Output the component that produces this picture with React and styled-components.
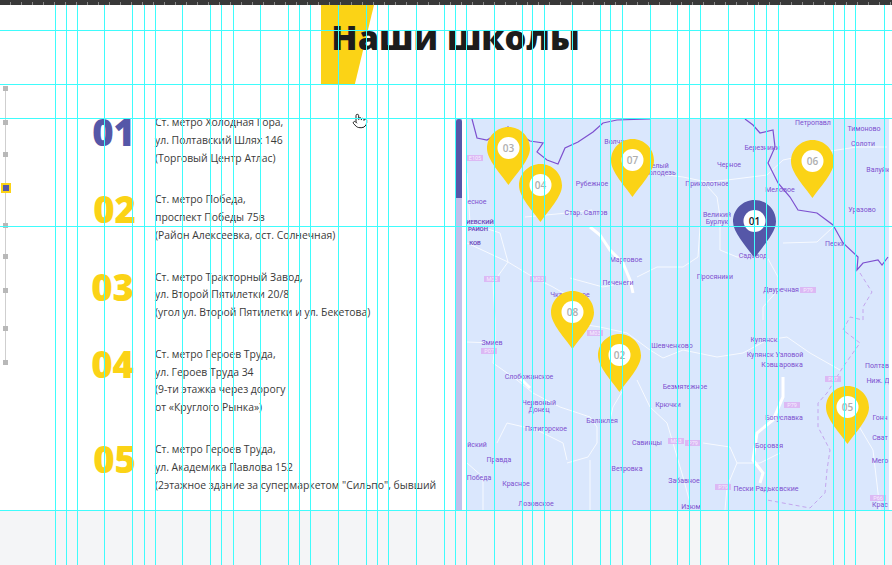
import React from 'react';
import styled, { createGlobalStyle } from 'styled-components';
import { Pointer } from 'lucide-react';

const verticalGuides = [
  55, 66, 77, 104, 132, 144, 155, 182, 210, 221, 233, 260, 288, 299, 310, 338, 366, 377, 388, 416, 444,
  455, 466, 494, 522, 532, 544, 572, 600, 610, 622, 650, 677, 689, 700, 728, 754, 766, 778, 833, 844, 855, 884,
];
const horizontalGuides = [30, 84, 118, 226, 510];

const railDots = [
  { y: 88 }, { y: 122 }, { y: 154 }, { y: 188, active: true }, { y: 225 },
  { y: 256 }, { y: 290 }, { y: 328 }, { y: 362 },
];

const schools = [
  { num: '01', color: '#5557a8', pad: 20, lines: ['Ст. метро Холодная Гора,', 'ул. Полтавский Шлях 146', '(Торговый Центр Атлас)'] },
  { num: '02', color: '#fbd316', pad: 19, lines: ['Ст. метро Победа,', 'проспект Победы 75в', '(Район Алексеевка, ост. Солнечная)'] },
  { num: '03', color: '#fbd316', pad: 21, lines: ['Ст. метро Тракторный Завод,', 'ул. Второй Пятилетки 20/8', '(угол ул. Второй Пятилетки и ул. Бекетова)'] },
  { num: '04', color: '#fbd316', pad: 21, lines: ['Ст. метро Героев Труда,', 'ул. Героев Труда 34', '(9-ти этажка через дорогу', 'от «Круглого Рынка»)'] },
  { num: '05', color: '#fbd316', pad: 19, lines: ['Ст. метро Героев Труда,', 'ул. Академика Павлова 152', '(2этажное здание за супермаркетом "Сильпо", бывший'] },
];

const pins = [
  { num: '03', x: 487, y: 127 },
  { num: '04', x: 519, y: 164 },
  { num: '07', x: 611, y: 139 },
  { num: '01', x: 733, y: 200, active: true },
  { num: '06', x: 791, y: 140 },
  { num: '08', x: 551, y: 291 },
  { num: '02', x: 598, y: 334 },
  { num: '05', x: 826, y: 386 },
];

const mapLabels = [
  ['Петропавл', 813, 125], ['Тимоново', 864, 131], ['Солоти', 863, 146], ['Валуйк', 878, 172], ['Уразово', 862, 212],
  ['Волчанск', 620, 144], ['Белый', 658, 168], ['Колодезь', 660, 175], ['Черное', 729, 167], ['Березники', 762, 150],
  ['Меловое', 780, 192], ['Приколотное', 707, 186], ['Рубежное', 592, 186], ['Стар. Салтов', 586, 215],
  ['Великий', 717, 217], ['Бурлук', 717, 224], ['Садовод', 753, 258], ['Пески', 835, 246], ['Мартовое', 626, 262],
  ['Печенеги', 618, 285], ['Просяники', 715, 279], ['Двуречная', 781, 292], ['Чкаловское', 570, 297], ['есное', 477, 204],
  ['Змиев', 492, 345], ['Шевченково', 672, 348], ['Купянск', 764, 342], ['Купянск Узловой', 775, 357],
  ['Ковшаровка', 782, 367], ['Слобожанское', 529, 379], ['Безмятежное', 685, 389], ['Крючки', 668, 407],
  ['Червоный', 539, 405], ['Донец', 539, 412], ['Балаклея', 602, 423], ['Пятигорское', 546, 431], ['Богуславка', 784, 420],
  ['Полтав', 877, 368], ['Ниж. Д', 878, 383], ['Гонч', 880, 420], ['Сват', 880, 440], ['Мего', 880, 463],
  ['Крас', 880, 507], ['Савинцы', 647, 445], ['Боровая', 769, 448], ['йский', 477, 447], ['Правда', 499, 462],
  ['Победа', 479, 480], ['Ветровка', 627, 471], ['Красное', 516, 486], ['Забавное', 684, 483],
  ['Пески Радьковские', 766, 491], ['Лозовское', 536, 506], ['Изюм', 691, 509],
];

const mapDistricts = [
  ['ИЕВСКИЙ', 480, 224], ['РАЙОН', 478, 231], ['КОВ', 475, 245],
];

const mapBadges = [
  ['E105', 475, 158], ['M03', 492, 279], ['M03', 538, 279], ['P79', 808, 290], ['P07', 489, 351], ['M03', 595, 333],
  ['P79', 792, 405], ['P07', 833, 379], ['P66', 878, 498], ['M03', 676, 441], ['P79', 693, 443], ['P79', 723, 487],
];

const roads = [
  '467,173 470,223 500,233 508,262',
  '467,243 508,262 533,277 553,287 570,297',
  '508,262 493,283 495,320 495,343 493,363 517,380 533,393 560,407 590,417 597,427 597,443 588,457 567,463',
  '525,217 567,213 592,210',
  '637,277 657,267 683,267 698,257 700,227',
  '570,278 603,287 623,283',
  '653,173 683,177 707,182 727,180 767,175 783,160 817,153 857,147 887,147',
  '708,187 717,197 720,217 720,250 737,257 767,257 778,277 778,290 763,307 763,320',
  '783,243 817,242 833,227',
  '467,342 493,343',
  '497,443 507,423 537,430 563,443 567,460',
  '573,323 600,327 627,333 650,350 663,358 683,350 717,357 743,353 767,340 787,337 810,353 840,370',
  '623,390 613,407 610,420',
  '637,380 650,407 667,423 673,443 683,477 690,503',
  '703,443 730,447 737,463 760,463 780,453',
  '737,463 727,487 725,510',
  '857,423 873,450 880,510',
  '467,463 483,477 483,510',
  '590,460 590,510',
];

const rivers = [
  '590,227 600,235 610,250 623,263 630,280 633,293',
  '783,377 783,397 773,420 757,433 753,460 763,473 760,483',
  '520,378 530,388',
];

const GlobalStyle = createGlobalStyle`
  html, body {
    margin: 0;
    background: #fff;
  }
  body {
    font-family: "Open Sans", "Noto Sans", sans-serif;
  }
`;

const Page = styled.div`
  position: relative;
  width: 892px;
  height: 565px;
  overflow: hidden;
  display: flex;
  flex-direction: column;
  background: #f4f5f7;
`;

const Ruler = styled.div`
  height: 5px;
  flex: none;
  background:
    repeating-linear-gradient(90deg, transparent 0 10px, #8a8a8a 10px 11px) 0 2px / 100% 3px no-repeat,
    #383838;
`;

const Header = styled.header`
  position: relative;
  flex: none;
  height: 79px;
  display: flex;
  justify-content: center;
  background: #fff;
`;

const TitleMark = styled.div`
  position: absolute;
  left: 321px;
  top: 0;
  width: 53px;
  height: 79px;
  background: #fbd316;
  clip-path: polygon(0 0, 100% 0, 64% 100%, 0 100%);
`;

const Title = styled.h1`
  position: relative;
  margin: 12px 0 0 19px;
  font-size: 34.3px;
  line-height: 40px;
  font-weight: 800;
  color: #1c1c1c;
`;

const Main = styled.main`
  position: relative;
  flex: none;
  height: 426px;
  display: flex;
  background: #fff;
  overflow: hidden;
`;

const Rail = styled.nav`
  position: relative;
  flex: none;
  width: 11px;
  padding-top: 2px;
  &::before {
    content: '';
    position: absolute;
    left: 5px;
    top: 4px;
    width: 1px;
    height: 274px;
    background: #cfcfcf;
  }
`;

const RailDot = styled.span`
  position: absolute;
  box-sizing: border-box;
  left: ${(p) => (p.$active ? '1px' : '3px')};
  top: ${(p) => p.$top - 84 - (p.$active ? 5 : 2)}px;
  width: ${(p) => (p.$active ? '10px' : '5px')};
  height: ${(p) => (p.$active ? '10px' : '5px')};
  background: ${(p) => (p.$active ? '#5557a8' : '#b8b8b8')};
  border: ${(p) => (p.$active ? '2px solid #fbd316' : 'none')};
`;

const SchoolList = styled.section`
  flex: none;
  width: 445px;
  padding-top: 30px;
  display: flex;
  flex-direction: column;
  gap: 23.9px;
`;

const School = styled.article`
  display: flex;
`;

const SchoolNum = styled.div`
  flex: none;
  box-sizing: border-box;
  width: 144px;
  padding-right: ${(p) => p.$pad}px;
  text-align: right;
  font-size: 36.5px;
  line-height: 37px;
  font-weight: 800;
  color: ${(p) => p.$color};
`;

const Address = styled.div`
  font-size: 10.4px;
  line-height: 17.8px;
  color: #3a3a3a;
  white-space: nowrap;
`;

const ScrollTrack = styled.div`
  flex: none;
  width: 6px;
  margin-top: 35px;
  background: #c1c1ec;
`;

const ScrollThumb = styled.div`
  height: 79px;
  border-radius: 3px 3px 0 0;
  background: #5557a8;
`;

const MapPane = styled.div`
  position: relative;
  flex: none;
  width: 423px;
  margin: 35px 0 0 4px;
  background: #dae7fd;
  overflow: hidden;
`;

const MapCanvas = styled.svg`
  display: block;
  width: 423px;
  height: 391px;
  font-family: Roboto, "Noto Sans", sans-serif;
`;

const MapLabel = styled.text`
  font-size: 7px;
  fill: #7d50cf;
  text-anchor: middle;
`;

const DistrictLabel = styled(MapLabel)`
  font-size: 6px;
  font-weight: 600;
  fill: #6a45b8;
`;

const BadgeText = styled.text`
  font-size: 5.5px;
  fill: #f6efff;
  text-anchor: middle;
`;

const Pin = styled.div`
  position: absolute;
  left: ${(p) => p.$x - 466}px;
  top: ${(p) => p.$y - 119}px;
  width: 43px;
  height: 58px;
`;

const PinShape = styled.svg`
  display: block;
  width: 43px;
  height: 58px;
`;

const PinNum = styled.span`
  position: absolute;
  left: 0;
  right: 0;
  top: 12px;
  text-align: center;
  font-size: 10px;
  line-height: 18px;
  font-weight: 600;
  color: ${(p) => (p.$active ? '#1c1c1c' : '#aeaeae')};
`;

const Cursor = styled.div`
  position: absolute;
  left: 352px;
  top: 113px;
  display: flex;
  color: #222;
`;

const GuideV = styled.i`
  position: absolute;
  top: 5px;
  bottom: 0;
  left: ${(p) => p.$x}px;
  width: 1px;
  background: #3ffcfc;
`;

const GuideH = styled.i`
  position: absolute;
  left: 0;
  right: 0;
  top: ${(p) => p.$y}px;
  height: 1px;
  background: #3ffcfc;
`;

const MapDrawing = () => (
  <MapCanvas viewBox="466 119 423 391">
    {rivers.map((points) => (
      <polyline key={points} points={points} fill="none" stroke="#fff" strokeWidth="3" />
    ))}
    {roads.map((points) => (
      <polyline key={points} points={points} fill="none" stroke="#f7faff" strokeWidth="1" />
    ))}
    <polyline
      points="472,119 477,138 487,140 508,127 530,141 543,143 537,152 547,160 558,164 565,148 578,142 593,132 603,123 617,120 650,119"
      fill="none"
      stroke="#7d50cf"
      strokeWidth="1.2"
    />
    <polyline
      points="745,119 753,125 760,133 773,130 775,147 768,163 778,183 790,197 798,210 817,213 833,225 843,243 858,257 857,270 863,263 878,260 882,265 888,257"
      fill="none"
      stroke="#7d50cf"
      strokeWidth="1.2"
    />
    <polyline
      points="860,273 872,292 863,307 863,320 850,317 843,330 860,343 843,367 827,393 818,403 818,427 830,450 827,470 825,493 810,508 767,500"
      fill="none"
      stroke="#c3a6ee"
      strokeWidth="1"
      strokeDasharray="4 3"
    />
    {mapBadges.map(([text, x, y]) => (
      <g key={`${text}-${x}`}>
        <rect x={x - 8} y={y - 3} width="16" height="6" fill="#dcb9f4" />
        <BadgeText x={x} y={y + 2}>{text}</BadgeText>
      </g>
    ))}
    {mapLabels.map(([text, x, y]) => (
      <MapLabel key={`${text}-${x}`} x={x} y={y}>{text}</MapLabel>
    ))}
    {mapDistricts.map(([text, x, y]) => (
      <DistrictLabel key={text} x={x} y={y}>{text}</DistrictLabel>
    ))}
  </MapCanvas>
);

const MapPin = ({ num, x, y, active }) => (
  <Pin $x={x} $y={y}>
    <PinShape viewBox="0 0 43 58">
      <path
        d="M21.5 0C33.4 0 43 9.6 43 21.5C43 33 29 47 21.5 58C14 47 0 33 0 21.5C0 9.6 9.6 0 21.5 0Z"
        fill={active ? '#5557a8' : '#fbd316'}
      />
      <circle cx="21.5" cy="21" r="11" fill="#fff" />
    </PinShape>
    <PinNum $active={active}>{num}</PinNum>
  </Pin>
);

export default function App() {
  return (
    <>
      <GlobalStyle />
      <Page>
        <Ruler />
        <Header>
          <TitleMark />
          <Title>Наши школы</Title>
        </Header>
        <Main>
          <Rail>
            {railDots.map((dot) => (
              <RailDot key={dot.y} $top={dot.y} $active={dot.active} />
            ))}
          </Rail>
          <SchoolList>
            {schools.map((school) => (
              <School key={school.num}>
                <SchoolNum $color={school.color} $pad={school.pad}>{school.num}</SchoolNum>
                <Address>
                  {school.lines.map((line) => (
                    <div key={line}>{line}</div>
                  ))}
                </Address>
              </School>
            ))}
          </SchoolList>
          <ScrollTrack>
            <ScrollThumb />
          </ScrollTrack>
          <MapPane>
            <MapDrawing />
            {pins.map((pin) => (
              <MapPin key={pin.num} {...pin} />
            ))}
          </MapPane>
        </Main>
        <Cursor>
          <Pointer size={16} strokeWidth={1.5} fill="#fff" />
        </Cursor>
        {verticalGuides.map((x) => (
          <GuideV key={x} $x={x} />
        ))}
        {horizontalGuides.map((y) => (
          <GuideH key={y} $y={y} />
        ))}
      </Page>
    </>
  );
}
